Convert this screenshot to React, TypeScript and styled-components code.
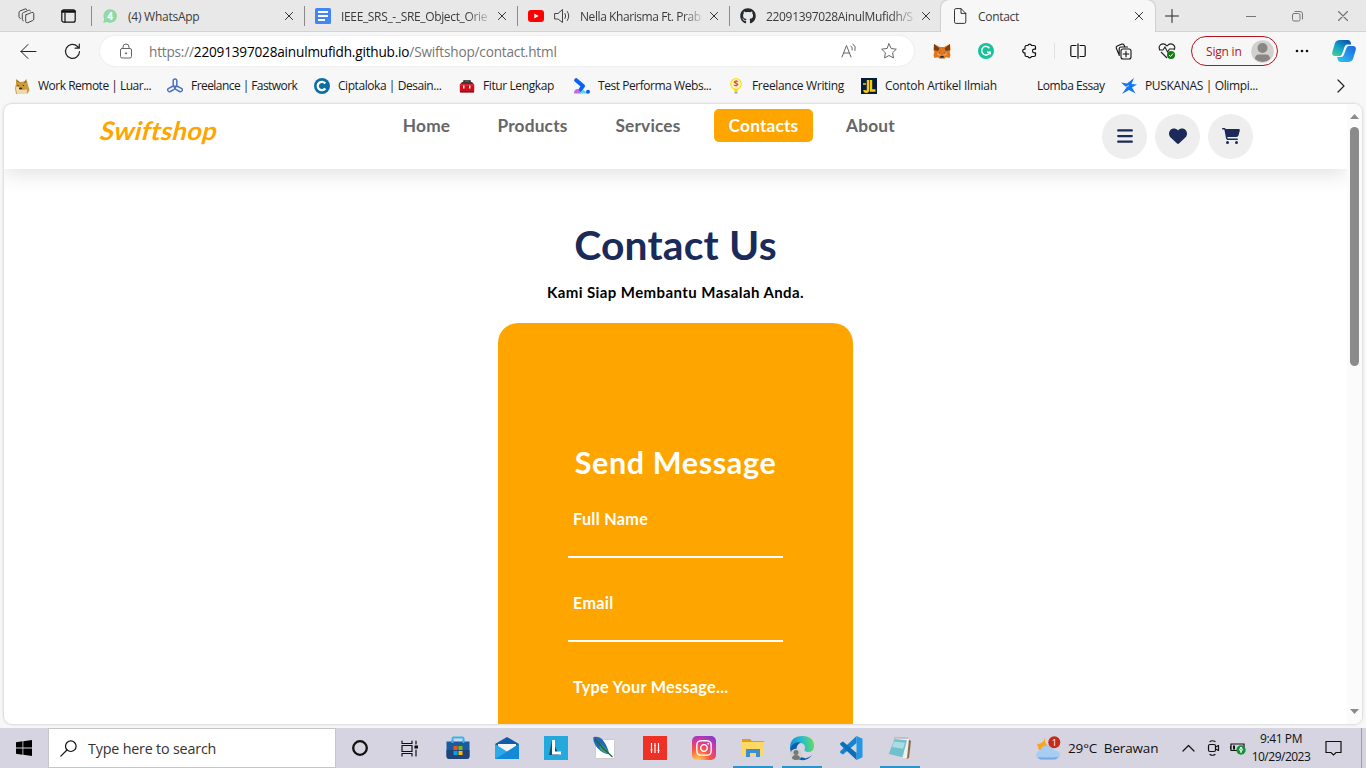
import React from 'react';
import styled, { createGlobalStyle, css } from 'styled-components';
import { FaBars, FaHeart, FaCartShopping, FaGithub, FaInstagram } from 'react-icons/fa6';

const ui = '"Open Sans", "Noto Sans", sans-serif';
const brand = 'Lato, "Open Sans", sans-serif';
const orange = '#ffa500';
const navy = '#1b2a59';

const GlobalStyle = createGlobalStyle`
  * { box-sizing: border-box; }
  body { margin: 0; overflow: hidden; background: #f7f7f7; font-family: ${ui}; color: #111; }
  svg { display: block; flex: none; }
`;

const Screen = styled.div`
  width: 1366px;
  height: 768px;
  display: flex;
  flex-direction: column;
  overflow: hidden;
`;

const Label = styled.span<{ $size?: number; $ls?: number; $color?: string }>`
  font-size: ${p => p.$size ?? 12}px;
  letter-spacing: ${p => p.$ls ?? -0.4}px;
  color: ${p => p.$color ?? 'inherit'};
  white-space: nowrap;
`;

/* ---------- tab strip ---------- */
const TabStrip = styled.div`
  height: 32px;
  flex: none;
  display: flex;
  background: #e8e8e8;
  box-shadow: inset 0 -1px 0 #d3d3d3;
  color: #3b3b3b;
`;
const StripButtons = styled.div`
  width: 91px;
  display: flex;
  align-items: center;
  gap: 26px;
  padding-left: 18px;
`;
const Tab = styled.div<{ $w: number; $active?: boolean }>`
  width: ${p => p.$w}px;
  display: flex;
  align-items: center;
  padding: 0 8px 0 11px;
  gap: 10px;
  ${p => p.$active
    ? css`background: #f7f7f7; border-radius: 8px 8px 0 0; box-shadow: 0 0 2px #999; clip-path: inset(0 -3px 0 -3px); padding: 0 9px 0 12px; gap: 11px;`
    : css`background: linear-gradient(#8a8a8a, #8a8a8a) 0 6px / 1px 20px no-repeat;`}
`;
const TabTitle = styled.div<{ $fade?: boolean }>`
  flex: 1;
  min-width: 0;
  overflow: hidden;
  white-space: nowrap;
  line-height: 20px;
  padding-bottom: 1px;
  ${p => p.$fade && css`mask-image: linear-gradient(90deg, #000 84%, rgba(0, 0, 0, 0.15) 100%);`}
`;
const CloseBox = styled.div`
  width: 14px;
  margin-left: -5px;
  display: flex;
  justify-content: center;
`;
const NewTab = styled.div`
  width: 33px;
  display: flex;
  align-items: center;
  justify-content: center;
`;
const WindowButtons = styled.div`
  margin-left: auto;
  display: flex;
  align-items: center;
  > * { width: 46px; display: flex; justify-content: center; }
`;

/* ---------- toolbar ---------- */
const Toolbar = styled.div`
  height: 38px;
  flex: none;
  display: flex;
  align-items: center;
`;
const ToolSlot = styled.div<{ $w: number }>`
  width: ${p => p.$w}px;
  flex: none;
  display: flex;
  align-items: center;
  justify-content: center;
`;
const AddressBar = styled.div`
  width: 814px;
  height: 30px;
  flex: none;
  display: flex;
  align-items: center;
  background: #fff;
  border-radius: 15px;
  box-shadow: 0 0 2px #ddd;
  margin-left: 12px;
  padding: 0 5px 0 6px;
`;
const Url = styled.div`
  flex: 1;
  padding-left: 3px;
  line-height: 20px;
  b { font-weight: 400; color: #000; }
`;
const SignIn = styled.div`
  width: 87px;
  height: 30px;
  flex: none;
  display: flex;
  align-items: center;
  justify-content: space-between;
  padding: 0 3px 0 14px;
  border: 1px solid #b3141d;
  border-radius: 15px;
  color: #b3141d;
`;

/* ---------- bookmarks ---------- */
const Bookmarks = styled.div`
  height: 33px;
  flex: none;
  display: flex;
  align-items: center;
  padding: 0 18px 1px 14px;
  color: #1a1a1a;
`;
const Bookmark = styled.div<{ $w: number }>`
  width: ${p => p.$w}px;
  flex: none;
  display: flex;
  align-items: center;
  gap: 8px;
  > span { padding-bottom: 1px; }
`;
const BlankIcon = styled.div`
  width: 16px;
  height: 16px;
`;
const Overflow = styled.div`
  margin-left: auto;
`;

/* ---------- web page ---------- */
const Frame = styled.div`
  height: 620px;
  flex: none;
  margin: 1px 4px 4px;
  display: flex;
  background: #fff;
  border-radius: 8px;
  box-shadow: 0 0 2px 1px #d9d9d9;
  overflow: hidden;
`;
const Page = styled.div`
  width: 1343px;
  font-family: ${brand};
  font-weight: 700;
`;
const Header = styled.header`
  height: 65px;
  display: flex;
  align-items: flex-start;
  padding-left: 97px;
  box-shadow: 0 5px 20px rgba(0, 0, 0, 0.12);
`;
const Logo = styled.div`
  width: 287px;
  padding-top: 11px;
  font: 700 25.5px/30px ${brand};
  color: ${orange};
  letter-spacing: 0.35px;
  > span { display: inline-block; transform: skewX(-14deg); }
`;
const Nav = styled.nav`
  display: flex;
  gap: 18px;
  width: 714px;
  padding-top: 5px;
`;
const NavItem = styled.a<{ $w: number; $active?: boolean }>`
  width: ${p => p.$w}px;
  height: 33px;
  line-height: 33px;
  text-align: center;
  font-size: 17.3px;
  letter-spacing: 0.18px;
  border-radius: 5px;
  color: ${p => (p.$active ? '#fff' : '#666')};
  background: ${p => (p.$active ? orange : 'transparent')};
`;
const Actions = styled.div`
  display: flex;
  gap: 8px;
  padding-top: 10px;
`;
const RoundButton = styled.div`
  width: 45px;
  height: 45px;
  border-radius: 50%;
  display: flex;
  align-items: center;
  justify-content: center;
  padding-bottom: 1px;
  background: #eee;
  color: ${navy};
  font-size: 18px;
`;
const Contact = styled.main`
  display: flex;
  flex-direction: column;
  align-items: center;
  padding-top: 51px;
`;
const Title = styled.h1`
  margin: 0;
  font-size: 40.8px;
  line-height: 50px;
  color: ${navy};
  letter-spacing: 0.2px;
`;
const Subtitle = styled.p`
  margin: 12px 0 21px;
  font-size: 15px;
  line-height: 20px;
  color: #000;
  letter-spacing: 0.42px;
`;
const Form = styled.form`
  width: 355px;
  height: 500px;
  padding: 120px 70px 0;
  border-radius: 20px;
  background: ${orange};
  color: #fff;
`;
const FormTitle = styled.h2`
  margin: -1px -20px 1px;
  text-align: center;
  font-size: 30.5px;
  line-height: 40px;
  letter-spacing: 0.65px;
  white-space: nowrap;
`;
const Field = styled.div`
  height: 84px;
  padding: 25px 5px 0;
  font-size: 16.2px;
  line-height: 22px;
  letter-spacing: 0.3px;
  background: linear-gradient(#fff, #fff) 0 73px / 100% 2px no-repeat;
`;
const Scrollbar = styled.div`
  width: 15px;
  display: flex;
  flex-direction: column;
  align-items: center;
  justify-content: space-between;
  padding: 10px 0 10px 0;
  background: #fbfbfb;
`;
const Thumb = styled.div`
  width: 9px;
  height: 239px;
  margin: 8px 0 auto;
  border-radius: 5px;
  background: #8b8b8b;
`;

/* ---------- taskbar ---------- */
const Taskbar = styled.div`
  height: 40px;
  flex: none;
  display: flex;
  align-items: stretch;
  background: #d6d4e0;
`;
const Start = styled.div`
  width: 48px;
  display: flex;
  align-items: center;
  justify-content: center;
`;
const Search = styled.div`
  width: 288px;
  margin-right: -0.6px;
  display: flex;
  align-items: center;
  gap: 11px;
  padding-left: 11px;
  background: #fff;
  border: 1px solid #c6c6c6;
`;
const TaskButton = styled.div<{ $running?: boolean }>`
  width: 49.1px;
  display: flex;
  align-items: center;
  justify-content: center;
  ${p => p.$running && css`background: linear-gradient(#2a94cb, #2a94cb) center bottom / 40px 2px no-repeat;`}
`;
const Tray = styled.div`
  margin-left: auto;
  width: 330px;
  display: flex;
  align-items: center;
`;
const Weather = styled.div`
  width: 140px;
  display: flex;
  align-items: center;
  gap: 7px;
`;
const Clock = styled.div`
  width: 60px;
  display: flex;
  flex-direction: column;
  align-items: center;
  line-height: 18px;
  padding-bottom: 1px;
`;
const Peek = styled.div`
  width: 5px;
  align-self: stretch;
  margin-left: auto;
  border-left: 1px solid #9b9aa6;
`;

type Draw = { w?: number; h?: number; vb?: string; sw?: number; c?: string; children: React.ReactNode };
const Icon = ({ w = 16, h, vb = '0 0 16 16', sw = 1, c = '#222', children }: Draw) => (
  <svg width={w} height={h ?? w} viewBox={vb} fill="none" stroke={c} strokeWidth={sw} strokeLinecap="round" strokeLinejoin="round">
    {children}
  </svg>
);

const Close = ({ c = '#333', s = 8 }) => (
  <Icon w={s} vb="0 0 8 8" c={c} sw={1}><path d="M.4.4l7.2 7.2M7.6.4L.4 7.6" /></Icon>
);

const Workspaces = () => (
  <Icon w={17} vb="0 0 17 17" c="#444">
    <path d="M8 6.800l5.600-2.300q2-.6 2.200 1.100v5.400q0 1-1 1.500l-5 2.200q-2 .5-2.100-1.300V8.200q0-1 .3-1.400z" />
    <path d="M5.300 12.800q-1-.3-1-1.400V6.200q0-1.200 1-1.600l5.300-2.300q1.200-.4 1.800.5M2.300 10.400Q1 10 1 8.800V4.500Q1 3.400 2 3l5-2q1-.3 1.700.4" />
  </Icon>
);
const VerticalTabs = () => (
  <Icon w={15} h={14} vb="0 0 15 14" c="#111" sw={1.2}>
    <rect x=".8" y=".8" width="13.400" height="12.400" rx="2" />
    <path d="M1.600 2.500h11.800" strokeWidth="2.600" /><path d="M4 4v9" />
  </Icon>
);
const WhatsApp = () => (
  <svg width="16" height="16" viewBox="0 0 16 16">
    <path d="M1.200 15l1-3.800A6.800 6.800 0 1 1 5 14z" fill="#8edaa6" />
    <text x="8.200" y="11.800" fontSize="10" fontWeight="700" textAnchor="middle" fill="#fff" fontFamily="Open Sans">4</text>
  </svg>
);
const Docs = () => (
  <svg width="16" height="16"><rect width="16" height="16" rx="1.500" fill="#4285f4" />
    <path d="M3 4h10M3 8h10M3 12h7" stroke="#fff" strokeWidth="1.800" /></svg>
);
const YouTube = () => (
  <svg width="16" height="12"><rect width="16" height="12" rx="3" fill="#f00" /><path d="M6.300 3.500v5l4.400-2.500z" fill="#fff" /></svg>
);
const Speaker = () => (
  <Icon c="#444"><path d="M1 5.500h3L8.500 1.500v13L4 11H1zM11 5.500q1.500 2.500 0 5M13.300 3.500q3 4.500 0 9" /></Icon>
);
const PageIcon = () => (
  <Icon w={14} h={16} vb="0 0 14 16" c="#333"><path d="M1.500 2q0-1.400 1.300-1.400H8l4.800 4.800V14q0 1.400-1.300 1.400H2.800Q1.500 15.400 1.500 14zM8 .6v4.800h4.800" /></Icon>
);
const Doge = () => (
  <svg width="16" height="16"><path d="M2 1l4 3 4-.5L12.500 1 14 7l1.500 5-2 4H2L1 10l1-4z" fill="#c99a3e" />
    <path d="M1.500 9q3-1 5 1.500t6 .5l1 5H3z" fill="#efd9a8" /><path d="M3.500 7.500h1.200M8.800 7.500H10M5.500 10h2.200v1H5.500z" stroke="#3a2a18" fill="#3a2a18" /><path d="M3 2.500l2 2M12 3l-1.500 2" stroke="#6e5320" /></svg>
);
const Fastwork = () => (
  <Icon c="#4a72c4" sw={1.500}>
    <rect x="6.200" y="1" width="3.600" height="7.500" rx="1.800" />
    <rect x="6.200" y="1" width="3.600" height="7.500" rx="1.800" transform="rotate(118 8 9)" />
    <rect x="6.200" y="1" width="3.600" height="7.500" rx="1.800" transform="rotate(242 8 9)" />
  </Icon>
);
const Ciptaloka = () => (
  <svg width="16" height="16"><circle cx="8" cy="8" r="8" fill="#0b6fa3" />
    <path d="M11.300 5.500A4.200 4.200 0 1 0 11.300 10.500" fill="none" stroke="#fff" strokeWidth="2.300" /></svg>
);
const Toolbox = () => (
  <svg width="16" height="16"><path d="M5 5V3h6v2" fill="none" stroke="#222" strokeWidth="1.500" /><path d="M3 4h10l2.500 3H.5z" fill="#4a3535" />
    <rect x=".8" y="6" width="14.400" height="8.500" rx="1" fill="#c8101e" /><path d="M1 7h14" stroke="#ef3440" /><path d="M4 7.500h1.500v3H4zM10 7.500h1.500v3H10z" fill="#eee" /><path d="M1 13.800h14" stroke="#7c0d15" /></svg>
);
const Performa = () => (
  <svg width="16" height="16"><path d="M2.200 2.200L9 8 6 12.500" stroke="#0b62f5" strokeWidth="4" fill="none" strokeLinejoin="round" strokeLinecap="round" />
    <path d="M0 15.500q0-5 4.500-4.500l2.500 4.500z" fill="#c667ee" /><path d="M5 15.500l4-4 5 4z" fill="#62d0fa" /><circle cx="14" cy="13.800" r="2" fill="#0b62f5" /></svg>
);
const Bulb = () => (
  <svg width="16" height="16"><circle cx="8" cy="6" r="5.300" fill="#fff6c7" stroke="#fbe21d" strokeWidth="1.200" />
    <path d="M6 11h4v2H6z" fill="#fbd91d" /><path d="M6.500 13.500h3v2h-3z" fill="#8fa9c6" />
    <text x="8" y="9.300" fontSize="9" fontWeight="700" textAnchor="middle" fill="#ea4a1f" fontFamily="Open Sans">$</text></svg>
);
const Jl = () => (
  <svg width="16" height="16"><rect width="16" height="16" fill="#061c3d" />
    <path d="M7 2v9.500q0 2.300-1.800 2.300T3.500 12" fill="none" stroke="#f2ca18" strokeWidth="2.400" /><path d="M10 2v10.500h4.500" fill="none" stroke="#f2ca18" strokeWidth="2.400" /><path d="M2 6h3" stroke="#f2ca18" strokeWidth="1.500" /></svg>
);
const Puskanas = () => (
  <svg width="16" height="16"><path d="M0 4.500l6 1L13 0l-2.500 6L16 6.500l-5 3 3.500 6L8 12l-7 4 4.500-6.500z" fill="#1677f2" /><path d="M1.500 10.500L8 7.500" stroke="#f7f7f7" strokeWidth=".7" /></svg>
);
const Fox = () => (
  <svg width="18" height="16" viewBox="0 0 18 16"><path d="M1 1l6 3h4l6-3 .5 6-.8 2 .8 3-1 3-3.500-.8L11 16H7l-2-1.800-3.500.8-1-3 .8-3L.5 7z" fill="#e2761b" />
    <path d="M1 1l5.500 4.500L5 8 1 7zM17 1l-5.500 4.500L13 8l4-1z" fill="#763d16" /><path d="M4.500 9l3 1v3l-3-1zM13.500 9l-3 1v3l3-1z" fill="#f6a051" /><path d="M5 9.500l2 .3.300 1.300zM13 9.500l-2 .3-.3 1.300zM7.300 13h3.400v1.800H7.300z" fill="#24323d" /><path d="M7 15h4v1H7z" fill="#c0ad9e" /></svg>
);
const Grammarly = () => (
  <svg width="16" height="16"><circle cx="8" cy="8" r="8" fill="#15c39a" />
    <path d="M11.500 5.200A4.300 4.300 0 1 0 12 9.200H9M12.200 8.500v3" fill="none" stroke="#fff" strokeWidth="1.500" /></svg>
);
const Puzzle = () => (
  <Icon c="#111" sw={1.200}><path d="M5.500 2.500h1.400a1.900 1.900 0 0 1 3.600 0H13q1.500 0 1.500 1.500v2.200h-1.200a1.800 1.800 0 0 0 0 3.600h1.200V12q0 1.500-1.500 1.500h-2.500a1.900 1.900 0 0 1-3.600 0H5.500Q4 13.500 4 12V9.900a1.900 1.900 0 1 1 0-3.700V4q0-1.500 1.500-1.500z" /></Icon>
);
const Split = () => (
  <Icon c="#111" sw={1.200}><path d="M6 2.500H2q-1.200 0-1.200 1.200v8.600q0 1.200 1.200 1.200h4M10 2.500h4q1.200 0 1.200 1.200v8.600q0 1.200-1.200 1.200h-4M8 .8v14.400" /></Icon>
);
const Collections = () => (
  <Icon w={17} vb="0 0 17 17" c="#111" sw={1.100}><rect x="6" y="6" width="10" height="10" rx="2" /><path d="M11 8.200v5.600M8.200 11h5.600M4 11.500L1.300 5.300Q.8 3.700 2.200 3L7 1.100q1.300-.4 2 .9l.6 1.300M4.200 12.500V6q0-2 2-2h6.300" /></Icon>
);
const Essentials = () => (
  <svg width="18" height="18"><path d="M2 8Q0 5 2.500 2.800 6 .5 9 4q3-3.500 6.300-1.200Q18 5 16 8M1 8h4l2-3 2.500 5 2-3H17M3 10l6 6" fill="none" stroke="#222" strokeWidth="1.100" />
    <circle cx="13" cy="13" r="4" fill="#107c10" /><path d="M11 13l1.500 1.500 2.500-3" fill="none" stroke="#fff" /></svg>
);
const Avatar = () => (
  <svg width="23" height="23"><circle cx="11.500" cy="11.500" r="11.300" fill="#d2d0ce" /><circle cx="11.500" cy="8" r="5" fill="#8a8683" /><path d="M4 19q0-4.500 4-4.500h7q4 0 4 4.500-3.300 3-7.500 3T4 19z" fill="#8a8683" /></svg>
);
const Copilot = () => (
  <svg width="24" height="24" viewBox="0 0 24 24">
    <defs>
      <linearGradient id="cpa" x1="0" y1="1" x2=".7" y2="0"><stop offset="0" stopColor="#50d38a" /><stop offset=".5" stopColor="#13a7c4" /><stop offset="1" stopColor="#0b58b5" /></linearGradient>
      <linearGradient id="cpb" x1="0" y1="1" x2="1" y2="0"><stop offset="0" stopColor="#35c5f4" /><stop offset="1" stopColor="#1766e0" /></linearGradient>
    </defs>
    <path d="M8 1h8q2 0 2.600 2l.7 2.500h-4q-2 0-2.600 2L10 15q-.6 2-2.500 2H3q-3.500 0-2.700-4L3 4q1.200-3 5-3z" fill="url(#cpa)" />
    <path d="M16 23H8.500q-2 0-2.600-2l-.7-3h4q2 0 2.600-2L14.500 9q.6-2 2.500-2h4q3.500 0 2.700 4L21 20q-1.200 3-5 3z" fill="url(#cpb)" />
  </svg>
);

const tabs = [
  { w: 213, title: '(4) WhatsApp', icon: <WhatsApp />, ls: -0.25 },
  { w: 213, title: 'IEEE_SRS_-_SRE_Object_Orie', icon: <Docs />, fade: true, ls: -0.35 },
  { w: 212, title: 'Nella Kharisma Ft. Prab', icon: <><YouTube /><Speaker /></>, fade: true, ls: -0.42 },
  { w: 212, title: '22091397028AinulMufidh/S', icon: <FaGithub size={16} color="#24292f" />, fade: true, ls: -0.33 },
  { w: 214, title: 'Contact', icon: <PageIcon />, active: true, ls: -0.3 },
];

const bookmarks = [
  { w: 153, name: 'Work Remote | Luar...', icon: <Doge />, ls: -0.5 },
  { w: 147, name: 'Freelance | Fastwork', icon: <Fastwork />, ls: -0.56 },
  { w: 145, name: 'Ciptaloka | Desain...', icon: <Ciptaloka />, ls: -0.44 },
  { w: 115, name: 'Fitur Lengkap', icon: <Toolbox />, ls: -0.4 },
  { w: 154, name: 'Test Performa Webs...', icon: <Performa />, ls: -0.45 },
  { w: 133, name: 'Freelance Writing', icon: <Bulb />, ls: -0.32 },
  { w: 152, name: 'Contoh Artikel Ilmiah', icon: <Jl />, ls: -0.28 },
  { w: 108, name: 'Lomba Essay', icon: <BlankIcon />, ls: -0.45 },
  { w: 140, name: 'PUSKANAS | Olimpi...', icon: <Puskanas />, ls: -0.35 },
];

const nav = [
  { name: 'Home', w: 77 }, { name: 'Products', w: 99 }, { name: 'Services', w: 96 },
  { name: 'Contacts', w: 99, active: true }, { name: 'About', w: 79 },
];

const Cortana = () => <Icon w={18} vb="0 0 18 18" c="#111" sw={2.300}><circle cx="9" cy="9" r="6.800" /></Icon>;
const TaskView = () => (
  <Icon w={17} vb="0 0 17 17" c="#111" sw={1.200}><path d="M1 1v2.500h10V1M1 16v-2.500h10V16M1 5.500h10v6H1zM15 1v3M15 10v6" /><path d="M14 6h2.500v2H14z" fill="#111" /></Icon>
);
const Store = () => (
  <svg width="24" height="24"><path d="M6.500 7V2.500q0-1 1-1h9q1 0 1 1V7" fill="none" stroke="#37b6ee" strokeWidth="2" />
    <path d="M.5 5.500h23V20q0 3-3 3h-17q-3 0-3-3z" fill="#1a5a9e" /><path d="M.5 14h23v6q0 3-3 3h-17q-3 0-3-3z" fill="#20437a" />
    <path d="M6.500 4v3M17.500 4v3" stroke="#37b6ee" strokeWidth="2" />
    <path d="M7.500 10h4v4h-4z" fill="#f25022" /><path d="M12.500 10h4v4h-4z" fill="#7fba00" /><path d="M7.500 15h4v4h-4z" fill="#00a4ef" /><path d="M12.500 15h4v4h-4z" fill="#ffb900" /></svg>
);
const Mail = () => (
  <svg width="24" height="24"><path d="M0 8l12-7 12 7v4H0z" fill="#0f5ca9" /><path d="M3 8h18v6l-9 3-9-3z" fill="#f3f3f3" /><path d="M0 8l12 7.500L24 8v15H0z" fill="#2ba9e9" /><path d="M0 23L24 8v15z" fill="#1489d8" /></svg>
);
const LApp = () => (
  <svg width="24" height="24"><rect width="24" height="24" fill="#23a9dc" /><path d="M8 4L5 19h10z" fill="#0a4c7b" /><path d="M9.500 4v13H17" fill="none" stroke="#fff" strokeWidth="3" /></svg>
);
const Feather = () => (
  <svg width="24" height="24"><rect x="2.500" y="3.500" width="19" height="19" rx="1" fill="#fff" stroke="#ccc" />
    <path d="M.5 1Q7 0 10.500 5 15 11 16 18 10 18 4.500 12-.5 6 .5 1z" fill="#2468b4" /><path d="M6.500 7q7 4 9.500 11-6-1-9-5z" fill="#3a9d83" /><path d="M2 3q8 10 17.500 18" stroke="#23643a" strokeWidth="1.300" fill="none" /></svg>
);
const Sliders = () => (
  <svg width="24" height="24"><rect width="24" height="24" fill="#ee3124" /><path d="M8.500 7v10M12 7v10M15.500 7v10M7.500 14h2M11 9.500h2M14.500 14.500h2" stroke="#fff" strokeWidth="1.200" /></svg>
);
const InstaTile = styled.div`
  width: 24px;
  height: 24px;
  border-radius: 5px;
  display: flex;
  align-items: center;
  justify-content: center;
  color: #fff;
  background: radial-gradient(circle at 25% 105%, #fd5 0, #ff543e 40%, #c837ab 70%, #6a3fd0 100%);
`;
const Folder = () => (
  <svg width="24" height="24"><path d="M1 3h8l2 2h12v5H1z" fill="#e0a014" /><path d="M1 6h22v14H1z" fill="#ffd763" /><path d="M5 21v-8h14v8h-4v-4H9v4z" fill="#3c8fd4" /></svg>
);
const Edge = () => (
  <svg width="26" height="26" viewBox="0 0 26 26">
    <defs><linearGradient id="eg" x1="0" y1=".4" x2="1" y2=".3"><stop offset="0" stopColor="#178fd8" /><stop offset=".5" stopColor="#25bdd0" /><stop offset="1" stopColor="#67db58" /></linearGradient></defs>
    <path d="M1 13Q1 1 13.500 1 25 1.500 25 11q0 6-6 6-4-.2-3.500-2.500Q17 12 14.500 9 7 5 1 13z" fill="url(#eg)" />
    <path d="M1 13q4-7 11-5.500-5 2-4.500 8 1.500 6.500 8 7.500Q19 24 23 20q-4 6-11 5Q1.500 23 1 13z" fill="#0e5ea8" />
    <circle cx="7" cy="19.500" r="5.800" fill="#cfcfcf" /><circle cx="7" cy="17.500" r="2.500" fill="#777" /><path d="M3 23.500q0-3.500 4-3.500t4 3.500q-4 3-8 0z" fill="#777" />
  </svg>
);
const VsCode = () => (
  <svg width="24" height="24"><path d="M17.500 0l6 2.800v18.400l-6 2.800z" fill="#2496e6" /><path d="M17.500 0v7L4 18.500 1.500 17q-1-1 0-2z" fill="#1583cf" /><path d="M17.500 24v-7L4 5.500 1.500 7q-1 1 0 2z" fill="#0b6fb8" /></svg>
);
const Notepad = () => (
  <svg width="24" height="24"><path d="M20 3l3 2-2 17-3 1z" fill="#8a6c47" /><path d="M7 2l14 1-2 19.500-5-1z" fill="#f1f1ec" /><path d="M6.500 3l12.500 1.200-4.500 17L.8 18z" fill="#72bfcd" /><path d="M6 5.500l11 1.300-2 6L4 11z" fill="#a9dde2" /><path d="M6.500 2h13" stroke="#777" strokeDasharray="1 1" /></svg>
);
const WeatherIcon = () => (
  <svg width="25" height="25" viewBox="0 0 25 25"><path d="M9 2q-1 8 7 9l-2 3H3L1 8q6 0 8-6z" fill="#f5a623" />
    <path d="M5 23.500q-5-.3-5-4.500 0-4 4.500-4.500Q6 9 12 9.500q5 .5 6 5 6 0 6 4.700-.3 4-5 4.300z" fill="#a8cdf3" /><path d="M2 21q9 1 20 0-1.500 2.500-4 2.500H5q-2 0-3-2.500z" fill="#77a8e3" />
    <circle cx="18.300" cy="6.300" r="6" fill="#c42b1c" /><text x="18.300" y="9.800" fontSize="9" textAnchor="middle" fill="#fff" fontFamily="Open Sans">1</text></svg>
);

export default function App() {
  return (
    <Screen>
      <GlobalStyle />
      <TabStrip>
        <StripButtons><Workspaces /><VerticalTabs /></StripButtons>
        {tabs.map(t => (
          <Tab key={t.title} $w={t.w} $active={t.active}>
            {t.icon}
            <TabTitle $fade={t.fade}><Label $ls={t.ls}>{t.title}</Label></TabTitle>
            <CloseBox><Close /></CloseBox>
          </Tab>
        ))}
        <NewTab><Icon w={14} vb="0 0 14 14"><path d="M7 .5v13M.5 7h13" /></Icon></NewTab>
        <WindowButtons>
          <div><Icon w={10} vb="0 0 10 10" c="#777"><path d="M0 5.500h10" /></Icon></div>
          <div><Icon w={11} vb="0 0 11 11" c="#777"><rect x=".5" y="2.500" width="7.500" height="7.500" rx="1.500" /><path d="M3 .5h5q2.500 0 2.500 2.500v5" /></Icon></div>
          <div><Close c="#777" s={10} /></div>
        </WindowButtons>
      </TabStrip>

      <Toolbar>
        <ToolSlot $w={56}><Icon w={17} vb="0 0 17 17"><path d="M16 8.500H1M8 1.500l-7 7 7 7" /></Icon></ToolSlot>
        <ToolSlot $w={32}><Icon w={17} vb="0 0 17 17" sw={1.200}><path d="M15.500 8.500a7 7 0 1 1-2-5l1.500 1.500M15.300 1v4.200h-4.200" /></Icon></ToolSlot>
        <AddressBar>
          <ToolSlot $w={40}><Icon c="#666"><rect x="2.500" y="5.500" width="11" height="9.500" rx="1.500" /><path d="M5 5.500V4q0-3 3-3t3 3v1.500" /><circle cx="8" cy="10.300" r=".6" fill="#666" /></Icon></ToolSlot>
          <Url><Label $size={13.6} $ls={-0.19} $color="#767676">https://<b>22091397028ainulmufidh.github.io</b>/Swiftshop/contact.html</Label></Url>
          <ToolSlot $w={40}><Icon c="#666"><path d="M1 14L5.500 2.500 10 14M2.500 10h6M10 3q2 1.800 1.200 4M12 1q3.500 2.500 2 6.500" /></Icon></ToolSlot>
          <ToolSlot $w={40}><Icon c="#666"><path d="M8 .8l2.200 4.700 5.100.7-3.700 3.600.9 5.100L8 12.500l-4.500 2.400.9-5.100L.7 6.200l5.100-.7z" /></Icon></ToolSlot>
        </AddressBar>
        <ToolSlot $w={55}><Fox /></ToolSlot>
        <ToolSlot $w={34}><Grammarly /></ToolSlot>
        <ToolSlot $w={52}><Puzzle /></ToolSlot>
        <ToolSlot $w={0}><Icon w={2} h={16} vb="0 0 2 16" c="#ccc"><path d="M0 0v16" /></Icon></ToolSlot>
        <ToolSlot $w={46}><Split /></ToolSlot>
        <ToolSlot $w={44}><Collections /></ToolSlot>
        <ToolSlot $w={44}><Essentials /></ToolSlot>
        <ToolSlot $w={2} />
        <SignIn><Label $ls={-0.2}>Sign in</Label><Avatar /></SignIn>
        <ToolSlot $w={47}><Icon w={14} h={4} vb="0 0 14 4" c="none"><g fill="#111"><circle cx="2" cy="2" r="1.300" /><circle cx="7" cy="2" r="1.300" /><circle cx="12" cy="2" r="1.300" /></g></Icon></ToolSlot>
        <ToolSlot $w={37}><Copilot /></ToolSlot>
      </Toolbar>

      <Bookmarks>
        {bookmarks.map(b => (
          <Bookmark key={b.name} $w={b.w}>{b.icon}<Label $ls={b.ls}>{b.name}</Label></Bookmark>
        ))}
        <Overflow><Icon w={14} vb="0 0 14 14" sw={1.200}><path d="M4 1l6 6-6 6" /></Icon></Overflow>
      </Bookmarks>

      <Frame>
        <Page>
          <Header>
            <Logo><span>Swiftshop</span></Logo>
            <Nav>{nav.map(n => <NavItem key={n.name} $w={n.w} $active={n.active}>{n.name}</NavItem>)}</Nav>
            <Actions>
              <RoundButton><FaBars /></RoundButton>
              <RoundButton><FaHeart /></RoundButton>
              <RoundButton><FaCartShopping /></RoundButton>
            </Actions>
          </Header>
          <Contact>
            <Title>Contact Us</Title>
            <Subtitle>Kami Siap Membantu Masalah Anda.</Subtitle>
            <Form>
              <FormTitle>Send Message</FormTitle>
              <Field>Full Name</Field>
              <Field>Email</Field>
              <Field>Type Your Message...</Field>
            </Form>
          </Contact>
        </Page>
        <Scrollbar>
          <svg width="9" height="5"><path d="M0 5L4.500 0 9 5z" fill="#8b8b8b" /></svg>
          <Thumb />
          <svg width="9" height="5"><path d="M0 0l4.500 5L9 0z" fill="#8b8b8b" /></svg>
        </Scrollbar>
      </Frame>

      <Taskbar>
        <Start><svg width="16" height="16"><path d="M0 2.200L6.500 1.300V7.600H0zM7.300 1.200L16 0v7.600H7.300zM0 8.400h6.500v6.300L0 13.800zM7.300 8.400H16V16l-8.700-1.200z" fill="#000" /></svg></Start>
        <Search>
          <Icon w={17} vb="0 0 17 17" c="#111" sw={1.200}><circle cx="10.800" cy="6.200" r="5.300" /><path d="M7 10L.8 16.200" /></Icon>
          <Label $size={14.3} $ls={-0.18} $color="#333">Type here to search</Label>
        </Search>
        <TaskButton><Cortana /></TaskButton>
        <TaskButton><TaskView /></TaskButton>
        <TaskButton><Store /></TaskButton>
        <TaskButton><Mail /></TaskButton>
        <TaskButton><LApp /></TaskButton>
        <TaskButton><Feather /></TaskButton>
        <TaskButton><Sliders /></TaskButton>
        <TaskButton><InstaTile><FaInstagram size={18} /></InstaTile></TaskButton>
        <TaskButton $running><Folder /></TaskButton>
        <TaskButton $running><Edge /></TaskButton>
        <TaskButton><VsCode /></TaskButton>
        <TaskButton $running><Notepad /></TaskButton>
        <Tray>
          <Weather><WeatherIcon /><Label $size={13.500} $ls={-0.15}>29°C&nbsp; Berawan</Label></Weather>
          <ToolSlot $w={24}><Icon w={13} h={8} vb="0 0 13 8" c="#111" sw={1.200}><path d="M1 7l5.500-5.500L12 7" /></Icon></ToolSlot>
          <ToolSlot $w={25}><Icon c="#111" w={14} h={16} vb="0 0 14 16" sw={1.200}><rect x="2.500" y="4.500" width="7" height="7" rx="1.500" /><path d="M9.500 7l3-1.500v5l-3-1.500M4 1.500q2.500-1.500 5 0M4 14.500q2.500 1.500 5 0" /></Icon></ToolSlot>
          <ToolSlot $w={26}><svg width="16" height="14"><path d="M1 3h13v6.500H1zM0 5v3" fill="none" stroke="#111" strokeWidth="1.200" /><path d="M3 4.500h2v4H3z" fill="#111" /><circle cx="11" cy="9" r="4.700" fill="#16923a" /><path d="M11 6q3 3 0 4.500Q8 9 11 6v6" fill="none" stroke="#fff" /></svg></ToolSlot>
          <Clock><Label $size={12} $ls={-0.4}>9:41 PM</Label><Label $size={12} $ls={-0.5}>10/29/2023</Label></Clock>
          <ToolSlot $w={44}><Icon w={17} vb="0 0 17 17" c="#111" sw={1.200}><path d="M1 1.500h15v11h-5L8.500 15 6 12.500H1z" strokeLinejoin="miter" /></Icon></ToolSlot>
          <Peek />
        </Tray>
      </Taskbar>
    </Screen>
  );
}
